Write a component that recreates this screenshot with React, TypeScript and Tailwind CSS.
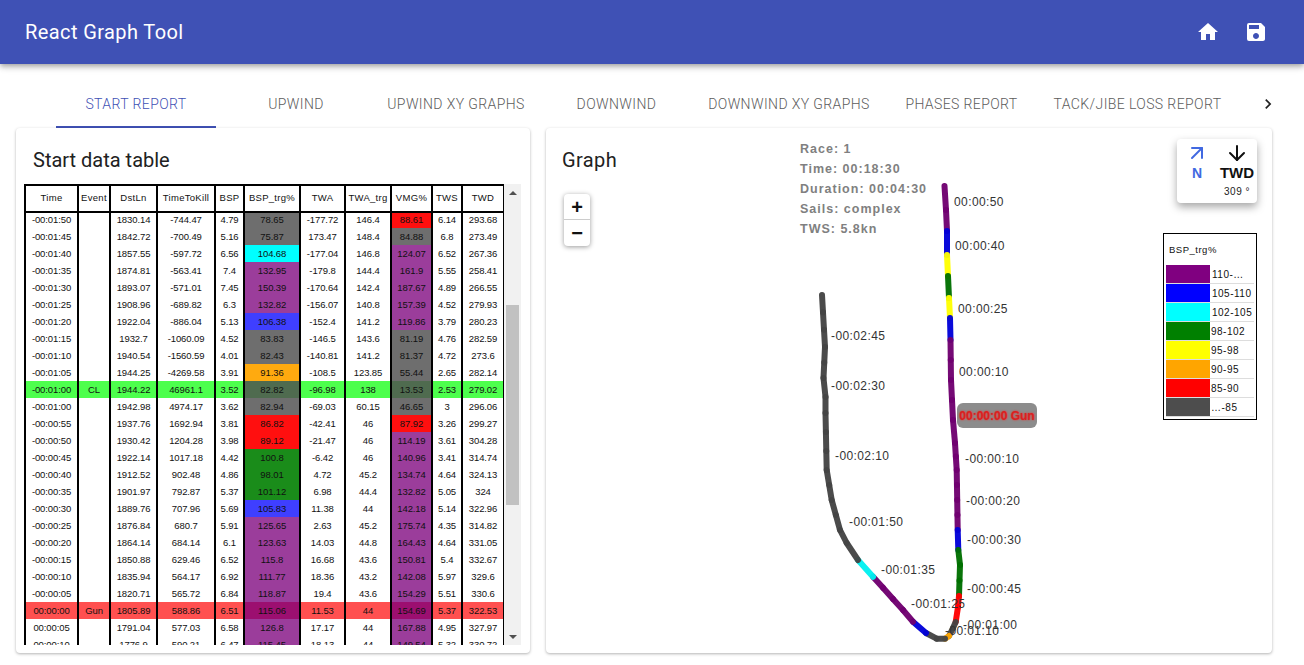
import { ArrowDown, ArrowUpRight } from 'lucide-react'
import { MdChevronRight, MdHome, MdSave } from 'react-icons/md'

const TABS = [
  { label: 'Start report', width: 'w-[160px]', active: true },
  { label: 'Upwind', width: 'w-[160px]' },
  { label: 'Upwind XY graphs', width: 'w-[160px]' },
  { label: 'Downwind', width: 'w-[161px]' },
  { label: 'Downwind XY graphs', width: 'w-[184px]' },
  { label: 'Phases report', width: 'w-[161px]' },
  { label: 'Tack/Jibe loss report', width: 'w-[191px]' },
]

const COLUMNS = [
  { name: 'Time', width: 'w-[53px]' },
  { name: 'Event', width: 'w-[32px]' },
  { name: 'DstLn', width: 'w-[47px]' },
  { name: 'TimeToKill', width: 'w-[58px]' },
  { name: 'BSP', width: 'w-[29px]' },
  { name: 'BSP_trg%', width: 'w-[56px]' },
  { name: 'TWA', width: 'w-[45px]' },
  { name: 'TWA_trg', width: 'w-[46px]' },
  { name: 'VMG%', width: 'w-[41px]' },
  { name: 'TWS', width: 'w-[30px]' },
  { name: 'TWD', width: 'w-[42px]' },
]

const ROWS = [
  ['-00:01:50', '', '1830.14', '-744.47', '4.79', '78.65', '-177.72', '146.4', '88.61', '6.14', '293.68'],
  ['-00:01:45', '', '1842.72', '-700.49', '5.16', '75.87', '173.47', '148.4', '84.88', '6.8', '273.49'],
  ['-00:01:40', '', '1857.55', '-597.72', '6.56', '104.68', '-177.04', '146.8', '124.07', '6.52', '267.36'],
  ['-00:01:35', '', '1874.81', '-563.41', '7.4', '132.95', '-179.8', '144.4', '161.9', '5.55', '258.41'],
  ['-00:01:30', '', '1893.07', '-571.01', '7.45', '150.39', '-170.64', '142.4', '187.67', '4.89', '266.55'],
  ['-00:01:25', '', '1908.96', '-689.82', '6.3', '132.82', '-156.07', '140.8', '157.39', '4.52', '279.93'],
  ['-00:01:20', '', '1922.04', '-886.04', '5.13', '106.38', '-152.4', '141.2', '119.86', '3.79', '280.23'],
  ['-00:01:15', '', '1932.7', '-1060.09', '4.52', '83.83', '-146.5', '143.6', '81.19', '4.76', '282.59'],
  ['-00:01:10', '', '1940.54', '-1560.59', '4.01', '82.43', '-140.81', '141.2', '81.37', '4.72', '273.6'],
  ['-00:01:05', '', '1944.25', '-4269.58', '3.91', '91.36', '-108.5', '123.85', '55.44', '2.65', '282.14'],
  ['-00:01:00', 'CL', '1944.22', '46961.1', '3.52', '82.82', '-96.98', '138', '13.53', '2.53', '279.02'],
  ['-00:01:00', '', '1942.98', '4974.17', '3.62', '82.94', '-69.03', '60.15', '46.65', '3', '296.06'],
  ['-00:00:55', '', '1937.76', '1692.94', '3.81', '86.82', '-42.41', '46', '87.92', '3.26', '299.27'],
  ['-00:00:50', '', '1930.42', '1204.28', '3.98', '89.12', '-21.47', '46', '114.19', '3.61', '304.28'],
  ['-00:00:45', '', '1922.14', '1017.18', '4.42', '100.8', '-6.42', '46', '140.96', '3.41', '314.74'],
  ['-00:00:40', '', '1912.52', '902.48', '4.86', '98.01', '4.72', '45.2', '134.74', '4.64', '324.13'],
  ['-00:00:35', '', '1901.97', '792.87', '5.37', '101.12', '6.98', '44.4', '132.82', '5.05', '324'],
  ['-00:00:30', '', '1889.76', '707.96', '5.69', '105.83', '11.38', '44', '142.18', '5.14', '322.96'],
  ['-00:00:25', '', '1876.84', '680.7', '5.91', '125.65', '2.63', '45.2', '175.74', '4.35', '314.82'],
  ['-00:00:20', '', '1864.14', '684.14', '6.1', '123.63', '14.03', '44.8', '164.43', '4.64', '331.05'],
  ['-00:00:15', '', '1850.88', '629.46', '6.52', '115.8', '16.68', '43.6', '150.81', '5.4', '332.67'],
  ['-00:00:10', '', '1835.94', '564.17', '6.92', '111.77', '18.36', '43.2', '142.08', '5.97', '329.6'],
  ['-00:00:05', '', '1820.71', '565.72', '6.84', '118.87', '19.4', '43.6', '154.29', '5.51', '330.6'],
  ['00:00:00', 'Gun', '1805.89', '588.86', '6.51', '115.06', '11.53', '44', '154.69', '5.37', '322.53'],
  ['00:00:05', '', '1791.04', '577.03', '6.58', '126.8', '17.17', '44', '167.88', '4.95', '327.97'],
  ['00:00:10', '', '1776.9', '590.21', '6.47', '115.45', '18.13', '44', '149.54', '5.32', '330.72'],
]

const LEGEND = [
  { label: '110-…', color: 'bg-[#800080]', indent: 'pl-[2px]' },
  { label: '105-110', color: 'bg-[#0000ff]', indent: 'pl-[2px]' },
  { label: '102-105', color: 'bg-[#00ffff]', indent: 'pl-[2px]' },
  { label: '98-102', color: 'bg-[#008000]', indent: 'pl-[1px]' },
  { label: '95-98', color: 'bg-[#ffff00]', indent: 'pl-[1px]' },
  { label: '90-95', color: 'bg-[#ffa500]', indent: 'pl-[1px]' },
  { label: '85-90', color: 'bg-[#ff0000]', indent: 'pl-[1px]' },
  { label: '…-85', color: 'bg-[#4d4d4d]', indent: 'pl-[1px]' },
]

const INFO = ['Race: 1', 'Time: 00:18:30', 'Duration: 00:04:30', 'Sails: complex', 'TWS: 5.8kn']

const GRAY = '#444444'
const PURPLE = '#6f006f'
const BLUE = '#0000d8'
const GREEN = '#006f00'
const YELLOW = '#ffff00'

// track pieces in page coordinates, from the line start round the mark
const TRACK: { color: string; points: number[][] }[] = [
  { color: PURPLE, points: [[944.5, 186], [946, 210], [947, 231]] },
  { color: BLUE, points: [[947, 231], [947, 255]] },
  { color: YELLOW, points: [[947, 255], [948, 276]] },
  { color: GREEN, points: [[948, 276], [949, 298]] },
  { color: YELLOW, points: [[949, 298], [950, 318]] },
  { color: BLUE, points: [[950, 318], [950.5, 340]] },
  { color: PURPLE, points: [[950.5, 340], [951, 380], [953, 420], [955, 443], [956.7, 470], [957.7, 530]] },
  { color: BLUE, points: [[957.7, 530], [958.3, 550]] },
  { color: GREEN, points: [[958.3, 550], [960, 565], [959, 596]] },
  { color: '#ff0000', points: [[959, 596], [958, 607], [955.7, 622]] },
  { color: GRAY, points: [[955.7, 622], [953, 628], [949, 636]] },
  { color: '#ffa500', points: [[949, 636], [945, 638.7]] },
  { color: GRAY, points: [[945, 638.7], [936.7, 638.7], [926, 633]] },
  { color: BLUE, points: [[926, 633], [913, 621.7]] },
  { color: PURPLE, points: [[913, 621.7], [903, 610], [873, 576.7]] },
  { color: '#00f0f0', points: [[873, 576.7], [858, 560]] },
  {
    color: GRAY,
    points: [[858, 560], [846.7, 543], [840, 530], [831.7, 500], [826.7, 470], [825.5, 413], [825.5, 397], [823.5, 378], [825, 347], [822, 295]],
  },
]

const TRACK_LABELS = [
  ['00:00:50', 954, 202],
  ['00:00:40', 955, 246],
  ['00:00:25', 958, 309],
  ['00:00:10', 959, 372],
  ['-00:00:10', 965, 459],
  ['-00:00:20', 966, 501],
  ['-00:00:30', 967, 540],
  ['-00:00:45', 967, 589],
  ['-00:01:00', 963, 625],
  ['-00:01:10', 945, 631],
  ['-00:01:25', 911, 604],
  ['-00:01:35', 881, 570],
  ['-00:01:50', 849, 522],
  ['-00:02:10', 835, 456],
  ['-00:02:30', 831, 386],
  ['-00:02:45', 831, 336],
] as const

// split a polyline into short pieces so the round caps overlap like the plotted samples
function splitLine(points: number[][]) {
  const pieces: number[][] = []
  for (let i = 0; i < points.length - 1; i++) {
    const [x1, y1] = points[i]
    const [x2, y2] = points[i + 1]
    const count = Math.max(1, Math.round(Math.hypot(x2 - x1, y2 - y1) / 17))
    for (let k = 0; k < count; k++) {
      pieces.push([
        x1 + ((x2 - x1) * k) / count,
        y1 + ((y2 - y1) * k) / count,
        x1 + ((x2 - x1) * (k + 1)) / count,
        y1 + ((y2 - y1) * (k + 1)) / count,
      ])
    }
  }
  return pieces
}

function cellColor(value: number, tone: string) {
  if (value >= 110) return tone === 'Gun' ? 'bg-[#9c0f70]' : 'bg-[#9b3d9b]'
  if (value >= 105) return 'bg-[#3f3fff]'
  if (value >= 102) return 'bg-[#00ffff]'
  if (value >= 98) return 'bg-[#1a8c1a]'
  if (value >= 95) return 'bg-[#ffff0f]'
  if (value >= 90) return 'bg-[#ffaa0f]'
  if (value >= 85) return 'bg-[#ff0f0f]'
  return tone === 'CL' ? 'bg-[#4f6b4f]' : 'bg-[#6e6e6e]'
}

function rowColor(event: string) {
  if (event === 'CL') return 'bg-[#4dff4d]'
  if (event === 'Gun') return 'bg-[#ff5050]'
  return 'bg-white'
}

function ColGroup() {
  return (
    <colgroup>
      {COLUMNS.map((col) => (
        <col key={col.name} className={col.width} />
      ))}
    </colgroup>
  )
}

function DataTable() {
  return (
    <div className="flex h-[461px] w-[497px] font-['Liberation_Sans',Arial,sans-serif] text-[9.5px] text-[#111]">
      <div className="flex w-[480px] flex-col overflow-hidden">
        <table className="w-[480px] shrink-0 table-fixed border-collapse">
          <ColGroup />
          <thead>
            <tr className="h-[27px]">
              {COLUMNS.map((col) => (
                <th key={col.name} className="border-2 border-black p-0 text-center font-normal tracking-[0.3px]">
                  {col.name}
                </th>
              ))}
            </tr>
          </thead>
        </table>
        <div className="min-h-0 flex-1 overflow-hidden">
          <table className="-mt-[2px] w-[480px] table-fixed border-collapse">
            <ColGroup />
            <tbody>
              {ROWS.map((row) => (
                <tr key={row[0] + row[1] + row[2]} className={`h-[17px] ${rowColor(row[1])}`}>
                  {row.map((cell, i) => (
                    <td
                      key={i}
                      className={`border-x-2 border-black p-0 text-center leading-[17px] tracking-[-0.1px] ${
                        i === 5 || i === 8 ? cellColor(Number(cell), row[1]) : ''
                      }`}
                    >
                      {cell}
                    </td>
                  ))}
                </tr>
              ))}
            </tbody>
          </table>
        </div>
      </div>
      {/* scrollbar */}
      <div className="flex w-[17px] flex-col items-center bg-[#f1f1f1]">
        <div className="flex h-[17px] items-center justify-center">
          <div className="h-0 w-0 border-x-4 border-b-4 border-x-transparent border-b-[#505050]" />
        </div>
        <div className="h-[104px]" />
        <div className="h-[200px] w-[13px] bg-[#c1c1c1]" />
        <div className="flex-1" />
        <div className="flex h-[17px] items-center justify-center">
          <div className="h-0 w-0 border-x-4 border-t-4 border-x-transparent border-t-[#505050]" />
        </div>
      </div>
    </div>
  )
}

function TrackPlot() {
  return (
    <svg className="absolute inset-0 h-full w-full" viewBox="546 128 726 525">
      {TRACK.map((part, i) =>
        splitLine(part.points).map((p, k) => (
          <line
            key={`${i}-${k}`}
            x1={p[0]}
            y1={p[1]}
            x2={p[2]}
            y2={p[3]}
            stroke={part.color}
            strokeWidth={6}
            strokeLinecap="round"
            strokeOpacity={0.96}
          />
        )),
      )}
      {TRACK_LABELS.map(([label, x, y]) => (
        <text
          key={label}
          x={x}
          y={y + 4}
          fill="#333"
          fontFamily="'Liberation Sans', Arial, sans-serif"
          fontSize={12}
          letterSpacing={0.4}
        >
          {label}
        </text>
      ))}
    </svg>
  )
}

function GraphPanel() {
  return (
    <section className="relative h-[525px] w-[726px] overflow-hidden rounded bg-white shadow-[0_1px_3px_rgba(0,0,0,0.3)]">
      <TrackPlot />
      <h2 className="relative pl-[16px] pt-[19px] font-['Roboto',sans-serif] text-[20px] leading-[26px] tracking-[0.4px] text-[#212121]">
        Graph
      </h2>

      {/* zoom control */}
      <div className="absolute left-[18px] top-[66px] flex w-[26px] flex-col overflow-hidden rounded bg-white font-['Liberation_Sans',sans-serif] text-[#111] shadow-[0_1px_5px_rgba(0,0,0,0.4)]">
        <div className="flex h-[26px] items-center justify-center border-b border-[#ccc] text-[20px] font-bold leading-none">+</div>
        <div className="flex h-[26px] items-center justify-center text-[20px] font-bold leading-none">−</div>
      </div>

      {/* race info */}
      <div className="absolute left-[254px] top-[11px] font-['Liberation_Sans',sans-serif] text-[12.5px] font-bold leading-[20px] tracking-[1px] text-[#808080]">
        {INFO.map((line) => (
          <div key={line}>{line}</div>
        ))}
      </div>

      {/* gun marker */}
      <div className="absolute left-[411px] top-[275px] flex h-[25px] w-[80px] items-center justify-center rounded-md bg-[#8c8c8c] font-['Liberation_Sans',sans-serif] text-[12px] font-bold text-[#d82020] [text-shadow:0_0_2px_#ff2020]">
        00:00:00 Gun
      </div>

      {/* compass */}
      <div className="absolute left-[631px] top-[11px] grid h-[64px] w-[80px] grid-cols-2 rounded bg-white font-['Liberation_Sans',sans-serif] shadow-[0_4px_8px_rgba(0,0,0,0.35)]">
        <div className="flex flex-col items-center pt-[2px]">
          <ArrowUpRight className="h-[24px] w-[24px] text-[#4169e1]" strokeWidth={2} />
          <span className="text-[14px] font-bold leading-[16px] text-[#4169e1]">N</span>
        </div>
        <div className="flex flex-col items-center pt-[2px]">
          <ArrowDown className="h-[24px] w-[24px] text-[#111]" strokeWidth={2} />
          <span className="text-[15px] font-bold leading-[16px] text-[#111]">TWD</span>
          <span className="mt-[5px] text-[10px] leading-[12px] tracking-[0.5px] text-[#222]">309 °</span>
        </div>
      </div>

      {/* legend */}
      <div className="absolute left-[617px] top-[105px] h-[187px] w-[94px] border border-black bg-white px-[2px] font-['Liberation_Sans',sans-serif] text-[10px] tracking-[0.5px] text-[#111]">
        <div className="flex h-[31px] items-center pl-[3px] pt-[2px] text-[9.5px] tracking-[0.5px]">BSP_trg%</div>
        {LEGEND.map((item) => (
          <div key={item.label} className="flex h-[19px] items-stretch border-b border-[#ddd]">
            <div className={`w-[44px] ${item.color}`} />
            <div className={`flex items-center ${item.indent}`}>{item.label}</div>
          </div>
        ))}
      </div>
    </section>
  )
}

export default function App() {
  return (
    <div className="h-[665px] w-[1304px] overflow-hidden bg-white font-['Roboto',sans-serif]">
      <header className="flex h-[64px] items-center justify-between bg-[#3f51b5] pl-[25px] pr-[24px] text-white shadow-[0_2px_4px_-1px_rgba(0,0,0,0.2),0_4px_5px_0_rgba(0,0,0,0.14),0_1px_10px_0_rgba(0,0,0,0.12)]">
        <h1 className="text-[20px] font-normal tracking-[0.4px]">React Graph Tool</h1>
        <div className="flex">
          <button className="flex h-[48px] w-[48px] items-center justify-center">
            <MdHome size={24} />
          </button>
          <button className="flex h-[48px] w-[48px] items-center justify-center">
            <MdSave size={24} />
          </button>
        </div>
      </header>

      <nav className="mt-[16px] flex h-[48px] pl-[56px] pr-[16px]">
        <div className="flex w-[1192px] overflow-hidden">
          {TABS.map((tab) => (
            <div
              key={tab.label}
              className={`flex h-[48px] shrink-0 items-center justify-center border-b-2 pt-[2px] text-[14px] font-light uppercase tracking-[0.4px] ${tab.width} ${
                tab.active ? 'border-[#3f51b5] text-[#3f51b5]' : 'border-transparent text-[#5c5c5c]'
              }`}
            >
              {tab.label}
            </div>
          ))}
        </div>
        <div className="flex w-[40px] items-center justify-center text-[#222]">
          <MdChevronRight size={20} />
        </div>
      </nav>

      <main className="flex gap-[16px] pl-[16px]">
        <section className="h-[525px] w-[514px] overflow-hidden rounded bg-white shadow-[0_1px_3px_rgba(0,0,0,0.3)]">
          <h2 className="pl-[17px] pt-[19px] text-[20px] leading-[26px] text-[#212121]">Start data table</h2>
          <div className="ml-[8px] mt-[11px]">
            <DataTable />
          </div>
        </section>
        <GraphPanel />
      </main>
    </div>
  )
}
